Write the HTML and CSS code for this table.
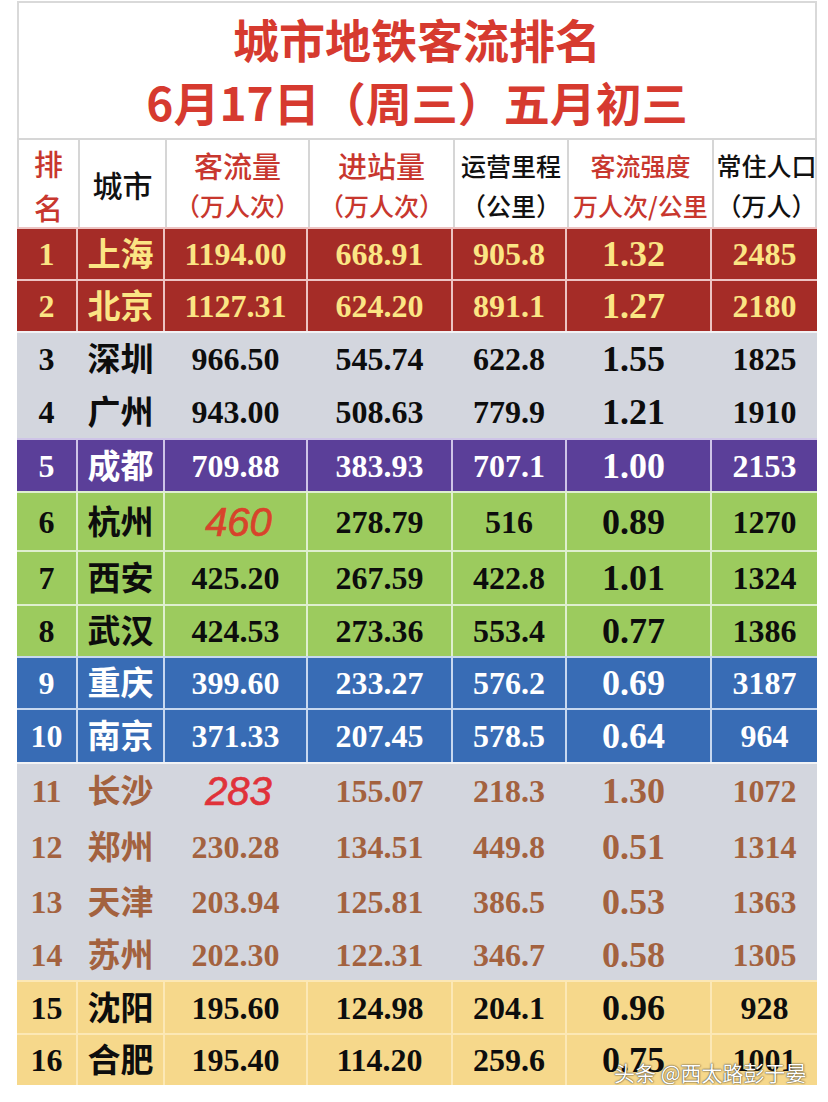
FILE: index.html
```html
<!DOCTYPE html>
<html lang="zh-CN">
<head>
<meta charset="utf-8">
<title>城市地铁客流排名</title>
<link rel="stylesheet" href="styles.css">
</head>
<body>
<div class="sheet">
  <div class="title-box">
    <div class="title-line">城市地铁客流排名</div>
    <div class="title-line">6月17日（周三）五月初三</div>
  </div>

  <div class="row head">
    <div class="c rank-h red-t"><span>排</span><span>名</span></div>
    <div class="c big-h">城市</div>
    <div class="c two red-t"><span class="h30">客流量</span><span>（万人次）</span></div>
    <div class="c two red-t"><span class="h30">进站量</span><span>（万人次）</span></div>
    <div class="c two"><span>运营里程</span><span>（公里）</span></div>
    <div class="c two red-t"><span>客流强度</span><span>万人次/公里</span></div>
    <div class="c two"><span>常住人口</span><span>（万人）</span></div>
  </div>

  <div class="band red">
    <div class="row h52"><div class="c n">1</div><div class="c city">上海</div><div class="c n">1194.00</div><div class="c n">668.91</div><div class="c n">905.8</div><div class="c n k">1.32</div><div class="c n">2485</div></div>
    <div class="row h52"><div class="c n">2</div><div class="c city">北京</div><div class="c n">1127.31</div><div class="c n">624.20</div><div class="c n">891.1</div><div class="c n k">1.27</div><div class="c n">2180</div></div>
  </div>

  <div class="band grey">
    <div class="row h53"><div class="c n">3</div><div class="c city">深圳</div><div class="c n">966.50</div><div class="c n">545.74</div><div class="c n">622.8</div><div class="c n k">1.55</div><div class="c n">1825</div></div>
    <div class="row h54"><div class="c n">4</div><div class="c city">广州</div><div class="c n">943.00</div><div class="c n">508.63</div><div class="c n">779.9</div><div class="c n k">1.21</div><div class="c n">1910</div></div>
  </div>

  <div class="band purple">
    <div class="row h53"><div class="c n">5</div><div class="c city">成都</div><div class="c n">709.88</div><div class="c n">383.93</div><div class="c n">707.1</div><div class="c n k">1.00</div><div class="c n">2153</div></div>
  </div>

  <div class="band green">
    <div class="row h59"><div class="c n">6</div><div class="c city">杭州</div><div class="c ital orange">460</div><div class="c n">278.79</div><div class="c n">516</div><div class="c n k">0.89</div><div class="c n">1270</div></div>
    <div class="row h54"><div class="c n">7</div><div class="c city">西安</div><div class="c n">425.20</div><div class="c n">267.59</div><div class="c n">422.8</div><div class="c n k">1.01</div><div class="c n">1324</div></div>
    <div class="row h52"><div class="c n">8</div><div class="c city">武汉</div><div class="c n">424.53</div><div class="c n">273.36</div><div class="c n">553.4</div><div class="c n k">0.77</div><div class="c n">1386</div></div>
  </div>

  <div class="band blue">
    <div class="row h52"><div class="c n">9</div><div class="c city">重庆</div><div class="c n">399.60</div><div class="c n">233.27</div><div class="c n">576.2</div><div class="c n k">0.69</div><div class="c n">3187</div></div>
    <div class="row h54"><div class="c n">10</div><div class="c city">南京</div><div class="c n">371.33</div><div class="c n">207.45</div><div class="c n">578.5</div><div class="c n k">0.64</div><div class="c n">964</div></div>
  </div>

  <div class="band grey brown">
    <div class="row h56"><div class="c n">11</div><div class="c city">长沙</div><div class="c ital scarlet">283</div><div class="c n">155.07</div><div class="c n">218.3</div><div class="c n k">1.30</div><div class="c n">1072</div></div>
    <div class="row h55"><div class="c n">12</div><div class="c city">郑州</div><div class="c n">230.28</div><div class="c n">134.51</div><div class="c n">449.8</div><div class="c n k">0.51</div><div class="c n">1314</div></div>
    <div class="row h55"><div class="c n">13</div><div class="c city">天津</div><div class="c n">203.94</div><div class="c n">125.81</div><div class="c n">386.5</div><div class="c n k">0.53</div><div class="c n">1363</div></div>
    <div class="row h52"><div class="c n">14</div><div class="c city">苏州</div><div class="c n">202.30</div><div class="c n">122.31</div><div class="c n">346.7</div><div class="c n k">0.58</div><div class="c n">1305</div></div>
  </div>

  <div class="band yellow">
    <div class="row h53"><div class="c n">15</div><div class="c city">沈阳</div><div class="c n">195.60</div><div class="c n">124.98</div><div class="c n">204.1</div><div class="c n k">0.96</div><div class="c n">928</div></div>
    <div class="row h52"><div class="c n">16</div><div class="c city">合肥</div><div class="c n">195.40</div><div class="c n">114.20</div><div class="c n">259.6</div><div class="c n k">0.75</div><div class="c n">1001</div></div>
  </div>

  <div class="watermark">头条 @西太路彭于晏</div>
</div>
</body>
</html>
```

FILE: styles.css
```css
* { box-sizing: border-box; }

html, body {
  margin: 0;
  padding: 0;
  background: #ffffff;
}

body {
  font-family: "Noto Sans CJK SC", "Noto Sans", sans-serif;
}

.sheet {
  position: relative;
  width: 800px;
  margin: 1px 0 0 17px;
}

.title-box {
  height: 137px;
  border: 2px solid #d9d9d9;
  border-bottom: 0;
  display: flex;
  flex-direction: column;
  align-items: center;
  padding-top: 4px;
  color: #d63a2f;
  font-weight: 700;
  font-size: 46px;
}

.title-line {
  height: 63px;
  line-height: 63px;
  white-space: nowrap;
}

.row {
  display: grid;
  grid-template-columns: 59px 87px 143px 145px 114px 145px 107px;
  border-top: 2px solid var(--line);
}

.c {
  display: flex;
  align-items: center;
  justify-content: center;
  border-left: 2px solid var(--line);
  line-height: 1;
  white-space: nowrap;
}

.c:first-child { border-left: 0; }

/* header */
.head {
  --line: #d6d6d6;
  height: 89px;
  border-left: 2px solid #d6d6d6;
  border-right: 2px solid #d6d6d6;
  background: #ffffff;
  color: #111111;
  font-size: 25px;
  font-weight: 500;
}

.head .c { flex-direction: column; }

.rank-h { font-size: 29px; gap: 8px; padding-top: 2px; }
.rank-h span { line-height: 36px; }
.big-h { font-size: 30px; }

.two span { line-height: 40px; }
.two span:first-child { margin-top: 2px; }
.two .h30 { font-size: 29px; }

.red-t { color: #c8372e; }

/* body cells */
.n {
  font-family: "Liberation Serif", "Times New Roman", serif;
  font-weight: 700;
  font-size: 32px;
}

.n.k {
  font-size: 36px;
  padding-right: 10px;
}

.city {
  font-weight: 700;
  font-size: 33px;
  padding-bottom: 3px;
}

.ital {
  font-family: "Liberation Sans", Arial, sans-serif;
  font-style: italic;
  font-size: 40px;
  padding-left: 6px;
  -webkit-text-stroke: 0.7px currentColor;
}

.orange { color: #d8432b !important; }
.scarlet { color: #e0323a !important; }

.h52 { height: 52px; }
.h53 { height: 53px; }
.h54 { height: 54px; }
.h55 { height: 55px; }
.h56 { height: 56px; }
.h59 { height: 59px; }

/* bands */
.red { background: #a52c27; color: #fbe584; --line: rgba(255, 235, 235, 0.8); }
.grey { background: #d3d6de; color: #0d0d0d; --line: transparent; }
.grey > .row:first-child { border-top-color: rgba(255, 255, 255, 0.7); }
.purple { background: #5b3f99; color: #ffffff; --line: rgba(235, 230, 250, 0.8); }
.green { background: #9ccb5e; color: #0d0d0d; --line: rgba(240, 248, 235, 0.8); }
.blue { background: #386cb5; color: #ffffff; --line: rgba(225, 235, 250, 0.85); }
.brown { color: #a3623f; }
.yellow { background: #f6d88b; color: #0d0d0d; --line: rgba(255, 240, 200, 0.7); }

.watermark {
  position: absolute;
  left: 597px;
  top: 1056px;
  font-size: 21px;
  color: #ffffff;
  white-space: nowrap;
  text-shadow: 0 0 2px rgba(0, 0, 0, 0.7), 0 0 1px rgba(0, 0, 0, 0.6);
}
```
